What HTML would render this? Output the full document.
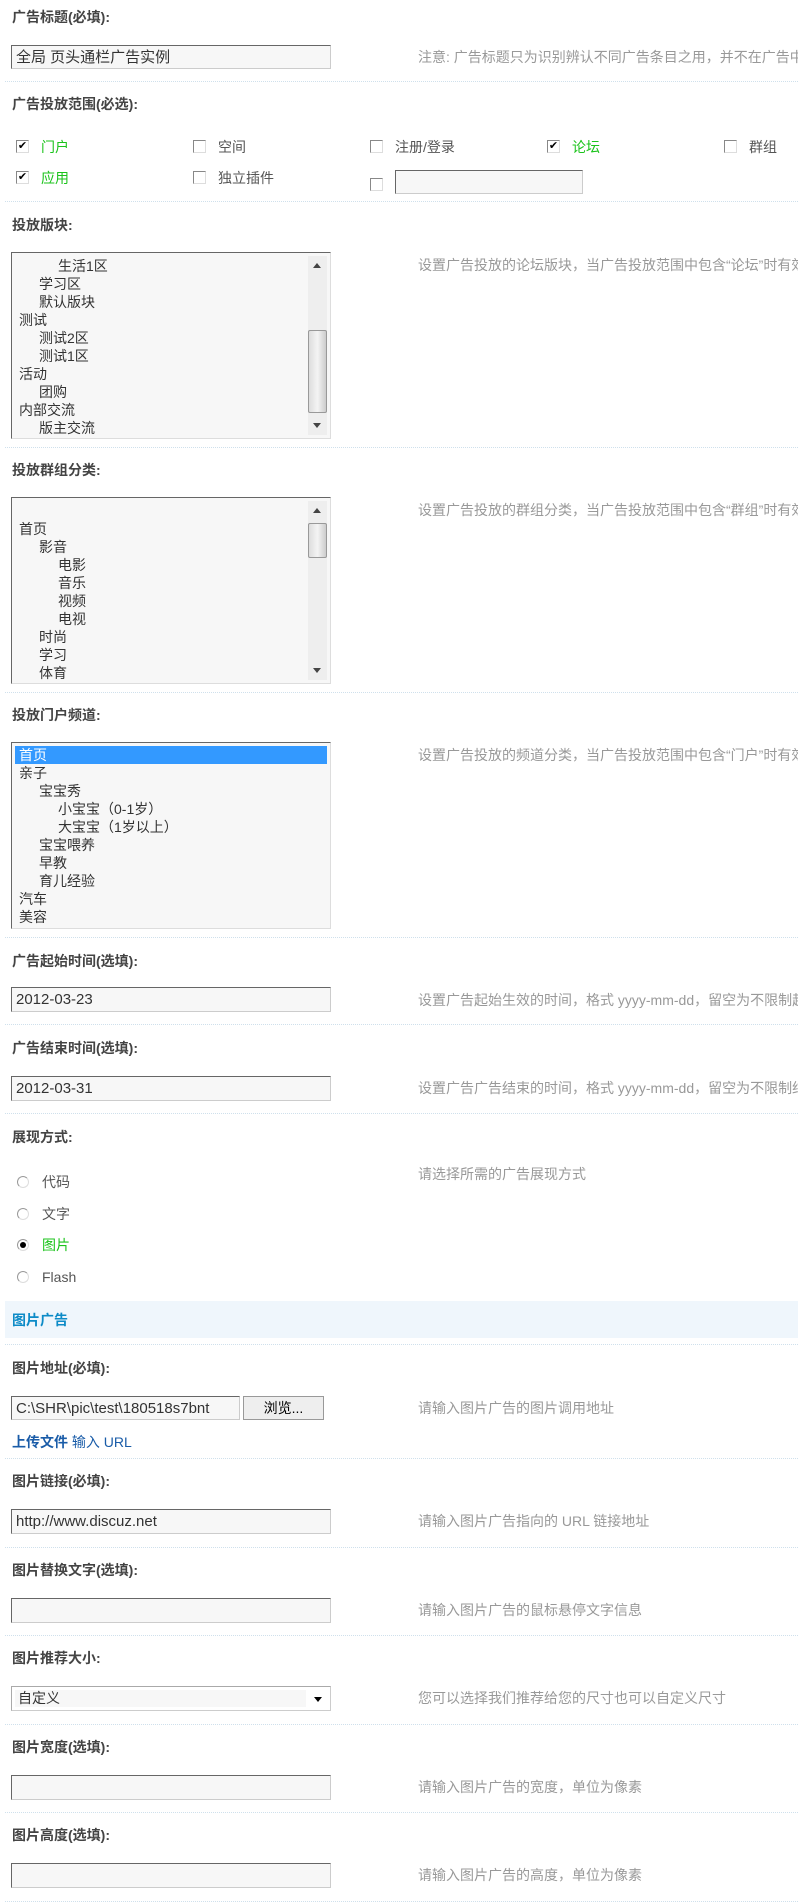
<!DOCTYPE html>
<html><head><meta charset="utf-8"><style>
*{margin:0;padding:0;box-sizing:border-box}
html,body{overflow:hidden}
body{width:798px;height:1904px;background:#fff;position:relative;overflow:hidden;font-family:"Liberation Sans","Noto Sans CJK SC",sans-serif;font-size:14px;color:#333}
.a{position:absolute;white-space:nowrap;line-height:18px}
.lb{font-weight:bold;color:#444;left:12px}
.tip{color:#999;left:418px;right:0;overflow:hidden}
.sep{position:absolute;left:5px;right:0;border-top:1px dotted #cfe0ec;height:0}
.in{position:absolute;left:11px;width:320px;height:25px;background:#f7f7f7;border:1px solid #ccc;border-top-color:#666;border-left-color:#666;padding:0 4px;line-height:23px;font-size:15px;color:#333;white-space:nowrap;overflow:hidden}
.cb{position:absolute;width:13px;height:13px;border:1px solid #888;border-right-color:#ddd;border-bottom-color:#ddd;background:#fff;font-size:11px;line-height:11px;text-align:center;color:#000}
.g{color:#1bc31b}
.lst{position:absolute;left:11px;width:320px;height:187px;background:#f7f7f7;border:1px solid #ddd;border-top-color:#666;border-left-color:#666;overflow:hidden}
.lst div{height:18px;line-height:18px;padding-left:7px;white-space:nowrap}
.lst .l1{padding-left:27px}.lst .l2{padding-left:46px}
.lst .sb{position:absolute;left:296px;top:3px;width:19px;height:179px;background:#eee;padding:0}
.lst .th{position:absolute;left:0;width:19px;padding:0;background:linear-gradient(90deg,#ddd,#f4f4f4,#ccc);border:1px solid #999;border-radius:2px}
.lst .ar{position:absolute;left:5px;width:0;height:0;padding:0;border-left:4px solid transparent;border-right:4px solid transparent}
.rd{position:absolute;left:17px;width:12px;height:12px;border-radius:50%;border:1px solid #999;border-right-color:#ddd;border-bottom-color:#ddd;background:#fff}
</style></head><body>

<div class="a lb" style="top:8px">广告标题(必填):</div>
<div class="in" style="top:45px;height:24px">全局 页头通栏广告实例</div>
<div class="a tip" style="top:48px">注意: 广告标题只为识别辨认不同广告条目之用，并不在广告中显示</div>
<div class="sep" style="top:81px"></div>

<div class="a lb" style="top:95px">广告投放范围(必选):</div>
<div class="cb" style="left:16px;top:140px">✔</div><div class="a g" style="left:41px;top:138px">门户</div>
<div class="cb" style="left:193px;top:140px"></div><div class="a" style="left:218px;top:138px;color:#555">空间</div>
<div class="cb" style="left:370px;top:140px"></div><div class="a" style="left:395px;top:138px;color:#555">注册/登录</div>
<div class="cb" style="left:547px;top:140px">✔</div><div class="a g" style="left:572px;top:138px">论坛</div>
<div class="cb" style="left:724px;top:140px"></div><div class="a" style="left:749px;top:138px;color:#555">群组</div>
<div class="cb" style="left:16px;top:171px">✔</div><div class="a g" style="left:41px;top:169px">应用</div>
<div class="cb" style="left:193px;top:171px"></div><div class="a" style="left:218px;top:169px;color:#555">独立插件</div>
<div class="cb" style="left:370px;top:178px"></div>
<div class="in" style="left:395px;top:170px;width:188px;height:24px"></div>
<div class="sep" style="top:201px"></div>

<div class="a lb" style="top:216px">投放版块:</div>
<div class="lst" style="top:252px">
<div style="height:4px"></div>
<div class="l2">生活1区</div><div class="l1">学习区</div><div class="l1">默认版块</div><div>测试</div><div class="l1">测试2区</div><div class="l1">测试1区</div><div>活动</div><div class="l1">团购</div><div>内部交流</div><div class="l1">版主交流</div>
<div class="sb"><div class="ar" style="top:7px;border-bottom:5px solid #444"></div><div class="th" style="top:74px;height:83px"></div><div class="ar" style="bottom:7px;border-top:5px solid #444"></div></div>
</div>
<div class="a tip" style="top:256px">设置广告投放的论坛版块，当广告投放范围中包含“论坛”时有效</div>
<div class="sep" style="top:447px"></div>

<div class="a lb" style="top:461px">投放群组分类:</div>
<div class="lst" style="top:497px">
<div style="height:22px"></div>
<div>首页</div><div class="l1">影音</div><div class="l2">电影</div><div class="l2">音乐</div><div class="l2">视频</div><div class="l2">电视</div><div class="l1">时尚</div><div class="l1">学习</div><div class="l1">体育</div>
<div class="sb"><div class="ar" style="top:7px;border-bottom:5px solid #444"></div><div class="th" style="top:22px;height:35px"></div><div class="ar" style="bottom:7px;border-top:5px solid #444"></div></div>
</div>
<div class="a tip" style="top:501px">设置广告投放的群组分类，当广告投放范围中包含“群组”时有效</div>
<div class="sep" style="top:692px"></div>

<div class="a lb" style="top:706px">投放门户频道:</div>
<div class="lst" style="top:742px">
<div style="height:3px"></div>
<div style="background:#3399ff;color:#fff;margin:0 3px;padding-left:4px">首页</div><div>亲子</div><div class="l1">宝宝秀</div><div class="l2">小宝宝（0-1岁）</div><div class="l2">大宝宝（1岁以上）</div><div class="l1">宝宝喂养</div><div class="l1">早教</div><div class="l1">育儿经验</div><div>汽车</div><div>美容</div>
</div>
<div class="a tip" style="top:746px">设置广告投放的频道分类，当广告投放范围中包含“门户”时有效</div>
<div class="sep" style="top:937px"></div>

<div class="a lb" style="top:952px">广告起始时间(选填):</div>
<div class="in" style="top:987px">2012-03-23</div>
<div class="a tip" style="top:991px">设置广告起始生效的时间，格式 yyyy-mm-dd，留空为不限制起始时间</div>
<div class="sep" style="top:1024px"></div>

<div class="a lb" style="top:1039px">广告结束时间(选填):</div>
<div class="in" style="top:1076px">2012-03-31</div>
<div class="a tip" style="top:1079px">设置广告广告结束的时间，格式 yyyy-mm-dd，留空为不限制结束时间</div>
<div class="sep" style="top:1113px"></div>

<div class="a lb" style="top:1128px">展现方式:</div>
<div class="rd" style="top:1176px"></div><div class="a" style="left:42px;top:1173px;color:#555">代码</div>
<div class="rd" style="top:1208px"></div><div class="a" style="left:42px;top:1205px;color:#555">文字</div>
<div class="rd" style="top:1239px"><div style="position:absolute;left:2px;top:2px;width:6px;height:6px;border-radius:50%;background:#000"></div></div><div class="a g" style="left:42px;top:1236px">图片</div>
<div class="rd" style="top:1271px"></div><div class="a" style="left:42px;top:1268px;color:#555">Flash</div>
<div class="a tip" style="top:1165px">请选择所需的广告展现方式</div>

<div style="position:absolute;left:5px;right:0;top:1301px;height:37px;background:#eff6fc"></div>
<div class="a" style="left:12px;top:1311px;font-weight:bold;color:#0d8bc7">图片广告</div>
<div class="sep" style="top:1344px"></div>

<div class="a lb" style="top:1359px">图片地址(必填):</div>
<div class="in" style="top:1396px;width:229px;height:24px">C:\SHR\pic\test\180518s7bnt</div>
<div style="position:absolute;left:243px;top:1396px;width:81px;height:24px;background:#eee;border:1px solid #999;text-align:center;line-height:22px;color:#000">浏览...</div>
<div class="a" style="left:12px;top:1433px;color:#1a5ca8"><b>上传文件</b> 输入 URL</div>
<div class="a tip" style="top:1399px">请输入图片广告的图片调用地址</div>
<div class="sep" style="top:1458px"></div>

<div class="a lb" style="top:1472px">图片链接(必填):</div>
<div class="in" style="top:1509px">http://www.discuz.net</div>
<div class="a tip" style="top:1512px">请输入图片广告指向的 URL 链接地址</div>
<div class="sep" style="top:1547px"></div>

<div class="a lb" style="top:1561px">图片替换文字(选填):</div>
<div class="in" style="top:1598px"></div>
<div class="a tip" style="top:1601px">请输入图片广告的鼠标悬停文字信息</div>
<div class="sep" style="top:1635px"></div>

<div class="a lb" style="top:1649px">图片推荐大小:</div>
<div class="in" style="top:1686px;border-color:#ccc;border-top-color:#aaa;border-left-color:#aaa;background:#fff;padding:3px"><div style="background:#f7f7f7;width:291px;height:17px;line-height:17px;font-size:14px;padding-left:3px">自定义</div><div style="position:absolute;right:8px;top:10px;border-left:4px solid transparent;border-right:4px solid transparent;border-top:5px solid #000"></div></div>
<div class="a tip" style="top:1689px">您可以选择我们推荐给您的尺寸也可以自定义尺寸</div>
<div class="sep" style="top:1724px"></div>

<div class="a lb" style="top:1738px">图片宽度(选填):</div>
<div class="in" style="top:1775px"></div>
<div class="a tip" style="top:1778px">请输入图片广告的宽度，单位为像素</div>
<div class="sep" style="top:1812px"></div>

<div class="a lb" style="top:1826px">图片高度(选填):</div>
<div class="in" style="top:1863px"></div>
<div class="a tip" style="top:1866px">请输入图片广告的高度，单位为像素</div>
<div class="sep" style="top:1901px"></div>
</body></html>
